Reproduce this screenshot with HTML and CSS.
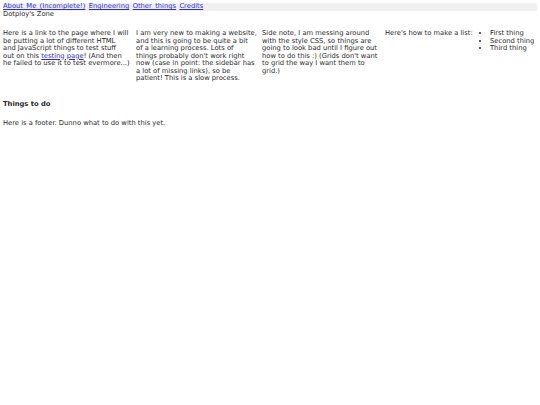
FILE: index.html
```html
<!DOCTYPE html>
<html>
<head>
<meta charset="utf-8">
<link rel="stylesheet" href="styles.css">
</head>
<body>
<nav class="topnav">
  <a href="#">About Me (Incomplete!)</a>
  <a href="#">Engineering</a>
  <a href="#">Other things</a>
  <a href="#">Credits</a>
</nav>
<header class="site-title">Dotploy's Zone</header>
<main class="grid">
  <p class="col col-a">Here is a link to the page where I will<br>be putting a lot of different HTML<br>and JavaScript things to test stuff<br>out on this <a href="#">testing page</a>! (And then<br>he failed to use it to test evermore...)</p>
  <p class="col col-b">I am very new to making a website,<br>and this is going to be quite a bit<br>of a learning process. Lots of<br>things probably don't work right<br>now (case in point: the sidebar has<br>a lot of missing links), so be<br>patient! This is a slow process.</p>
  <p class="col">Side note, I am messing around with the style CSS, so things are going to look bad until I figure out how to do this :) (Grids don't want to grid the way I want them to grid.)</p>
  <p class="col">Here's how to make a list:</p>
  <ul class="col list">
    <li>First thing</li>
    <li>Second thing</li>
    <li>Third thing</li>
  </ul>
</main>
<h3 class="todo">Things to do</h3>
<footer class="footer">Here is a footer. Dunno what to do with this yet.</footer>
</body>
</html>
```
FILE: styles.css
```css
html, body {
  margin: 0;
  padding: 0;
  background: #fff;
}
body {
  padding: 3px;
  font-family: "DejaVu Sans", "Open Sans", sans-serif;
  font-size: 6.75px;
  line-height: 7.5px;
  color: #2a2a2a;
}
a {
  color: #2b2bd6;
  text-decoration: underline;
}
.topnav {
  background: #f0f0f0;
  height: 7.5px;
  width: 534px;
  white-space: nowrap;
  word-spacing: 1.2px;
}
.site-title {
  margin: 0;
}
.grid {
  display: grid;
  grid-template-columns: 133px 126px 123px 98px 51px;
  margin-top: 12px;
}
.col {
  margin: 0;
  padding-right: 2px;
}
.col-a,
.col-b {
  padding-right: 0;
}
.list {
  padding-left: 7px;
  list-style: disc;
  white-space: nowrap;
}
.todo {
  font-size: 6.75px;
  font-weight: bold;
  margin: 18px 0 0 0;
}
.footer {
  margin-top: 12px;
}
```
